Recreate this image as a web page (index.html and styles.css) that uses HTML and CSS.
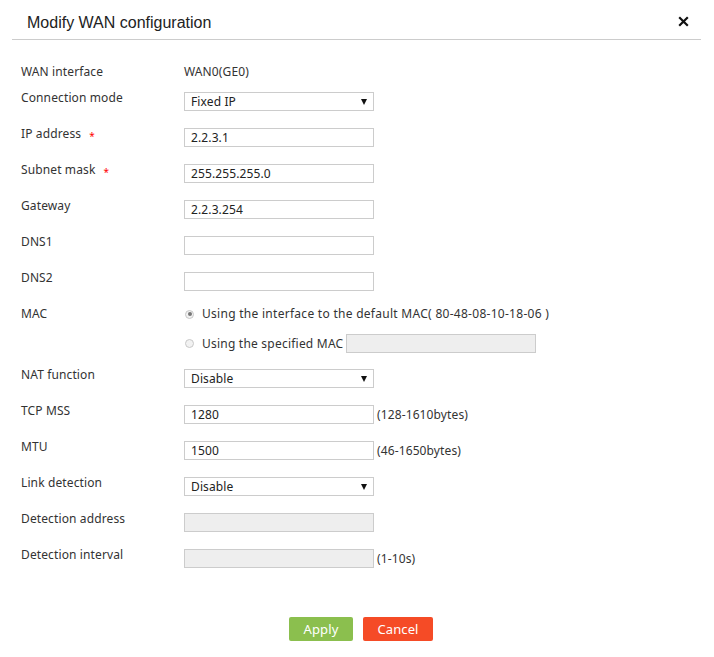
FILE: index.html
```html
<!DOCTYPE html>
<html>
<head>
<meta charset="utf-8">
<link rel="stylesheet" href="styles.css">
</head>
<body>
<div class="dialog">
  <div class="header">
    <div class="title">Modify WAN configuration</div>
    <div class="close"><svg width="11" height="11" viewBox="0 0 11 11"><path d="M1.2 1.2 L9.8 9.8 M9.8 1.2 L1.2 9.8" stroke="#111" stroke-width="2.2" fill="none"/></svg></div>
  </div>
  <div class="form">
    <div class="row first"><div class="label">WAN interface</div><div class="value">WAN0(GE0)</div></div>
    <div class="row"><div class="label">Connection mode</div><div class="select"><span>Fixed IP</span><i class="arrow"></i></div></div>
    <div class="row"><div class="label">IP address<span class="req">*</span></div><div class="input">2.2.3.1</div></div>
    <div class="row"><div class="label">Subnet mask<span class="req">*</span></div><div class="input">255.255.255.0</div></div>
    <div class="row"><div class="label">Gateway</div><div class="input">2.2.3.254</div></div>
    <div class="row"><div class="label">DNS1</div><div class="input"></div></div>
    <div class="row"><div class="label">DNS2</div><div class="input"></div></div>
    <div class="row mac">
      <div class="label">MAC</div>
      <div class="macopts">
        <div class="radio-line one"><span class="radio checked"></span><span class="rtext">Using the interface to the default MAC( 80-48-08-10-18-06 )</span></div>
        <div class="radio-line two"><span class="radio"></span><span class="rtext">Using the specified MAC</span><div class="input disabled"></div></div>
      </div>
    </div>
    <div class="row"><div class="label">NAT function</div><div class="select"><span>Disable</span><i class="arrow"></i></div></div>
    <div class="row"><div class="label">TCP MSS</div><div class="input">1280</div><div class="hint">(128-1610bytes)</div></div>
    <div class="row"><div class="label">MTU</div><div class="input">1500</div><div class="hint">(46-1650bytes)</div></div>
    <div class="row"><div class="label">Link detection</div><div class="select"><span>Disable</span><i class="arrow"></i></div></div>
    <div class="row"><div class="label">Detection address</div><div class="input disabled"></div></div>
    <div class="row"><div class="label">Detection interval</div><div class="input disabled"></div><div class="hint">(1-10s)</div></div>
  </div>
  <div class="buttons">
    <div class="btn apply">Apply</div>
    <div class="btn cancel">Cancel</div>
  </div>
</div>
</body>
</html>
```
FILE: styles.css
```css
html, body {
  margin: 0;
  padding: 0;
  background: #fff;
}
.dialog {
  width: 714px;
  height: 657px;
  font-family: "Noto Sans", "Open Sans", sans-serif;
  font-size: 12px;
  letter-spacing: 0.12px;
  color: #333;
}
.header {
  margin: 0 13px 0 12px;
  height: 39px;
  border-bottom: 1px solid #cccccc;
  display: flex;
  justify-content: space-between;
  align-items: flex-start;
}
.title {
  font-family: "Liberation Sans", Arial, sans-serif;
  font-size: 16px;
  letter-spacing: 0;
  line-height: 20px;
  color: #222;
  padding: 13px 0 0 15px;
}
.close {
  padding: 16px 12px 0 0;
  line-height: 0;
}
.form {
  padding: 24px 0 0 21px;
}
.row {
  display: flex;
  align-items: flex-start;
  height: 36px;
}
.row.first {
  height: 26px;
}
.label {
  width: 163px;
  line-height: 14px;
  padding-top: 1px;
  flex: none;
}
.req {
  color: #f00;
  margin-left: 8px;
  font-size: 10px;
  position: relative;
  top: 2px;
}
.value {
  line-height: 14px;
  padding-top: 1px;
}
.input, .select {
  box-sizing: border-box;
  width: 190px;
  height: 19px;
  margin-top: 2px;
  border: 1px solid #cccccc;
  background: #fff;
  padding-left: 6px;
  line-height: 18px;
  color: #222;
  flex: none;
}
.input.disabled {
  background: #eeeeee;
}
.select {
  display: flex;
  justify-content: space-between;
  align-items: center;
  padding-right: 6px;
}
.arrow {
  width: 0;
  height: 0;
  border-left: 3.5px solid transparent;
  border-right: 3.5px solid transparent;
  border-top: 6px solid #111;
}
.hint {
  margin-left: 3px;
  margin-top: 5px;
  line-height: 14px;
}
.row.mac {
  height: 61px;
}
.macopts {
  display: flex;
  flex-direction: column;
}
.radio-line {
  display: flex;
  align-items: center;
}
.radio-line.one {
  height: 14px;
  margin-top: 1px;
  margin-bottom: 11px;
}
.radio-line.two {
  height: 19px;
  margin-top: 2px;
}
.radio-line.two .input {
  margin-top: 0;
  margin-left: 3px;
}
.radio {
  box-sizing: border-box;
  width: 9px;
  height: 9px;
  border-radius: 50%;
  border: 1px solid #c8c8c8;
  background: #f2f2f2;
  margin: 0 8px 0 1px;
  position: relative;
}
.radio.checked::after {
  content: "";
  position: absolute;
  left: 1.5px;
  top: 1.5px;
  width: 4px;
  height: 4px;
  border-radius: 50%;
  background: #777;
}
.rtext {
  line-height: 14px;
  letter-spacing: 0.28px;
}
.radio-line.two .rtext {
  letter-spacing: 0.22px;
}
.buttons {
  display: flex;
  justify-content: center;
  gap: 10px;
  padding-top: 34px;
  padding-left: 8px;
}
.btn {
  height: 24px;
  line-height: 24px;
  color: #fff;
  font-size: 13px;
  text-align: center;
  border-radius: 2px;
}
.apply {
  width: 64px;
  background: #8bbf4e;
}
.cancel {
  width: 70px;
  background: #f54b26;
}
```
